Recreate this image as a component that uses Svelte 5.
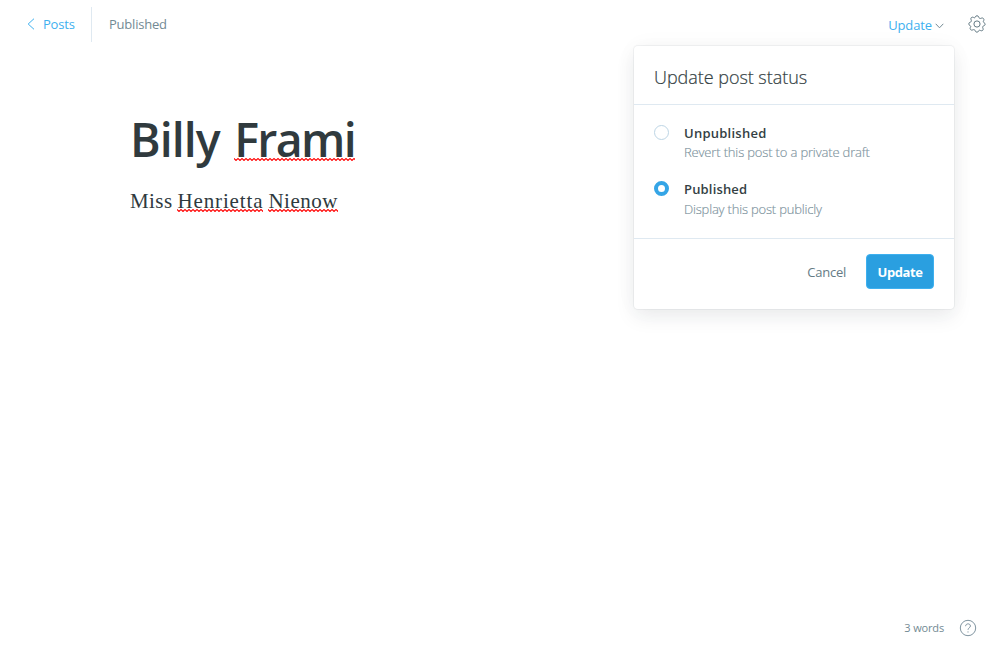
<script>
  let status = $state('published');
  const options = [
    { id: 'draft', label: 'Unpublished', note: 'Revert this post to a private draft' },
    { id: 'published', label: 'Published', note: 'Display this post publicly' }
  ];
</script>

<div class="editor">
  <header>
    <a class="back" href="#posts">
      <svg width="8" height="12" viewBox="0 0 8 12"><path d="M7 .7 1.2 6 7 11.3" /></svg>
      <span class="posts">Posts</span>
    </a>
    <div class="state">Published</div>
    <button class="trigger">
      <span>Update</span>
      <svg width="9" height="6" viewBox="0 0 9 6"><path d="M.7 .8 4.5 4.8 8.3 .8" /></svg>
    </button>
    <button class="gear" aria-label="Settings">
      <svg width="18" height="18" viewBox="0 0 18 18">
        <path d="M7.25 2.15C7.65 .25 10.35 .25 10.75 2.15C11 3.35 12.1 3.85 13.15 3.2C14.8 2.2 16.65 4.1 15.7 5.7C15 6.8 15.25 7.2 16 7.6C17.7 8.5 17.4 10.3 15.85 10.75C14.7 11.1 14.3 12.1 14.95 13.15C15.9 14.8 14.2 16.5 12.55 15.55C11.5 14.95 11 15.1 10.6 16C9.9 17.7 7.8 17.6 7.25 15.85C6.9 14.7 5.9 14.3 4.85 14.9C3.2 15.85 1.4 14.1 2.35 12.45C3 11.4 2.8 10.9 2 10.6C.3 9.9 .4 7.7 2.15 7.25C3.35 6.9 3.7 5.9 3.1 4.85C2.2 3.2 3.8 1.45 5.45 2.4C6.5 3 7 2.9 7.25 2.15Z" />
        <circle cx="9" cy="9" r="3.1" />
      </svg>
    </button>
  </header>

  <main>
    <h1><span class="billy">Billy</span> <span class="miss">Frami</span></h1>
    <p><span class="first">Miss</span> <span class="miss mid">Henrietta</span> <span class="miss last">Nienow</span></p>
  </main>

  <footer>
    <span class="count">3 words</span>
    <svg width="18" height="18" viewBox="0 0 18 18">
      <circle cx="9" cy="9" r="7.7" />
      <path d="M6.6 7.2C6.6 4.1 11.4 4.1 11.4 7C11.4 8.9 9 8.8 9 10.8M9 12.4V13.5" />
    </svg>
  </footer>

  <section class="menu">
    <h2>Update post status</h2>
    <div class="options">
      {#each options as o}
        <button class="option" onclick={() => (status = o.id)}>
          <i class:on={status === o.id}></i>
          <span class="text">
            <b class={o.id}>{o.label}</b>
            <small class={o.id}>{o.note}</small>
          </span>
        </button>
      {/each}
    </div>
    <div class="actions">
      <button class="cancel">Cancel</button>
      <button class="save">Update</button>
    </div>
  </section>
</div>

<style>
  :global(body) { background: #fff; }
  .editor {
    position: relative;
    box-sizing: border-box;
    height: 660px;
    display: flex;
    flex-direction: column;
    font-family: "Open Sans", "Noto Sans", sans-serif;
    font-size: 13px;
    color: #738a94;
    overflow: hidden;
  }
  button { font: inherit; color: inherit; background: none; border: 0; padding: 0; margin: 0; text-align: left; }
  svg { fill: none; stroke: currentColor; stroke-width: 1; display: block; flex: none; }
  header { display: flex; height: 48px; align-items: center; }
  .back {
    display: flex; align-items: center; gap: 8px; box-sizing: border-box;
    width: 92px; height: 35px; padding-left: 27px;
    color: #3eb0ef; text-decoration: none; border-right: 1px solid #dfe9f1;
  }
  .posts { letter-spacing: -.2px; }
  .state { padding-left: 17px; letter-spacing: -.22px; }
  .trigger { display: flex; align-items: center; gap: 3px; margin-left: auto; padding-top: 2px; color: #3eb0ef; letter-spacing: -.12px; }
  .trigger svg { color: #738a94; margin-top: 1px; }
  .gear { margin: 0 14px 0 24px; color: #657b85; }
  main { flex: 1; padding: 59px 130px 0; color: #303a3e; }
  h1 { display: flex; gap: 14.5px; margin: 0; height: 64px; font-size: 46.5px; line-height: 64px; font-weight: 600; letter-spacing: -1.65px; }
  .billy { letter-spacing: -.95px; }
  p { display: flex; gap: 5px; margin: 13px 0 0; font: 21px/34px "Liberation Serif", serif; }
  .first { letter-spacing: .4px; }
  .mid { letter-spacing: .87px; }
  .last { letter-spacing: .5px; }
  .miss {
    background: url("data:image/svg+xml,%3Csvg xmlns='http://www.w3.org/2000/svg' width='4' height='3'%3E%3Cpath d='M-1 1.5L0 .5L2 2.5L4 .5L5 1.5' fill='none' stroke='red' stroke-width='1.1'/%3E%3C/svg%3E") repeat-x 0 100%;
  }
  h1 .miss { height: 54px; line-height: 64px; }
  p .miss { height: 28px; }
  footer { display: flex; align-items: center; justify-content: flex-end; gap: 15px; height: 18px; padding: 0 23px 23px 0; font-size: 11px; }
  footer svg { color: #8094a0; }
  .count { letter-spacing: -.15px; margin-top: -2px; }
  .menu {
    position: absolute; left: 634px; top: 46px; width: 320px; height: 263px;
    display: flex; flex-direction: column; background: #fff; border-radius: 4px;
    box-shadow: 0 0 0 1px rgba(99,114,130,.08), 0 8px 20px rgba(27,39,51,.08), 0 0 24px rgba(27,39,51,.03);
  }
  h2 { margin: 0; box-sizing: border-box; height: 59px; padding: 16px 20px 0; border-bottom: 1px solid #dfe9f1; color: #343f44; font-size: 18px; line-height: 30px; font-weight: 300; letter-spacing: -.04px; -webkit-text-stroke: .2px #343f44; }
  .options { box-sizing: border-box; height: 134px; padding: 18px 20px 0; border-bottom: 1px solid #dfe9f1; display: flex; flex-direction: column; gap: 16px; }
  .option { display: flex; gap: 15px; height: 40px; }
  .option i { box-sizing: border-box; width: 15px; height: 15px; margin-top: 2px; border: 1px solid #bdd5e5; border-radius: 50%; flex: none; }
  .option i.on { border: 4px solid #35a5e6; }
  .text { display: flex; flex-direction: column; }
  b { font-weight: 600; line-height: 20px; color: #343f44; letter-spacing: .25px; }
  b.published { letter-spacing: .17px; }
  small { font-size: 13px; line-height: 20px; font-weight: 300; color: #7c929d; letter-spacing: -.19px; -webkit-text-stroke: .15px #7c929d; }
  small.draft { margin-top: -1px; letter-spacing: -.16px; }
  .actions { display: flex; justify-content: flex-end; align-items: center; gap: 20px; padding: 15px 20px 0 0; }
  .cancel { letter-spacing: -.25px; color: #657b85; }
  .save { box-sizing: border-box; width: 68px; height: 35px; border: 1px solid #3eb0ef; border-radius: 4px; background: #2a9fe0; color: #fff; font-weight: 700; text-align: center; letter-spacing: -.45px; }
</style>
